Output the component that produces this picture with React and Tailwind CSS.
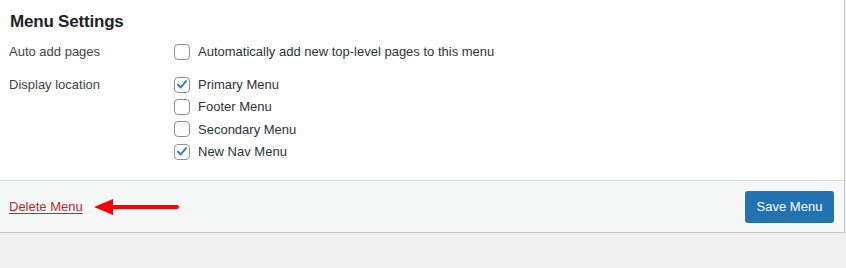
import React from 'react'

const LOCATIONS = [
  { label: 'Primary Menu', checked: true },
  { label: 'Footer Menu', checked: false },
  { label: 'Secondary Menu', checked: false },
  { label: 'New Nav Menu', checked: true },
]

function Checkbox({ checked }) {
  return (
    <span className="w-4 h-4 shrink-0 rounded-[4px] border border-[#8c8f94] bg-white flex items-center justify-center">
      {checked && (
        <svg width="15" height="15" viewBox="0 0 20 20">
          <path d="M4.2 10.2 L8.2 14.2 L15.8 5.2" fill="none" stroke="#3582c4" strokeWidth="3" strokeLinecap="round" strokeLinejoin="round" />
        </svg>
      )}
    </span>
  )
}

function Option({ label, checked }) {
  return (
    <label className="h-[22.4px] flex items-center gap-2 text-[13px] text-[#2c3338]">
      <Checkbox checked={checked} />
      <span>{label}</span>
    </label>
  )
}

export default function App() {
  return (
    <div
      className="min-h-screen bg-[#f0f0f1] pr-px"
      style={{ fontFamily: '"Liberation Sans", Arial, sans-serif' }}
    >
      <div className="bg-white border-r border-b border-[#c3c4c7]">
        {/* Settings */}
        <div className="px-[9px] pt-[10px] pb-[17px]">
          <h3 className="text-[17px] leading-[24px] font-semibold text-[#1d2327] pl-px tracking-[-0.2px]">Menu Settings</h3>

          <div className="grid grid-cols-[165px_1fr] mt-[7px] text-[13px] text-[#3c434a]">
            <div className="h-[22px] flex items-center">Auto add pages</div>
            <div>
              <Option label="Automatically add new top-level pages to this menu" checked={false} />
            </div>

            <div className="h-[22px] flex items-center mt-[10px]">Display location</div>
            <div className="mt-[10px]">
              {LOCATIONS.map((loc) => (
                <Option key={loc.label} label={loc.label} checked={loc.checked} />
              ))}
            </div>
          </div>
        </div>

        {/* Footer */}
        <div className="bg-[#f6f7f7] border-t border-[#dcdcde] pl-[9px] pr-[10px] pt-[10px] pb-[9px] flex items-center justify-between">
          <div className="flex items-center">
            <a href="#" className="text-[13px] text-[#b32d2e] underline underline-offset-2">Delete Menu</a>
            <svg width="86" height="20" viewBox="0 0 86 20" className="ml-[11px]">
              <polygon points="0,10 19,2 19,18" fill="#ff0000" />
              <line x1="17" y1="10" x2="83" y2="10" stroke="#ff0000" strokeWidth="4" strokeLinecap="round" />
            </svg>
          </div>
          <button className="h-8 w-[89px] rounded-[3px] bg-[#2271b1] text-white text-[13px]">Save Menu</button>
        </div>
      </div>
    </div>
  )
}
